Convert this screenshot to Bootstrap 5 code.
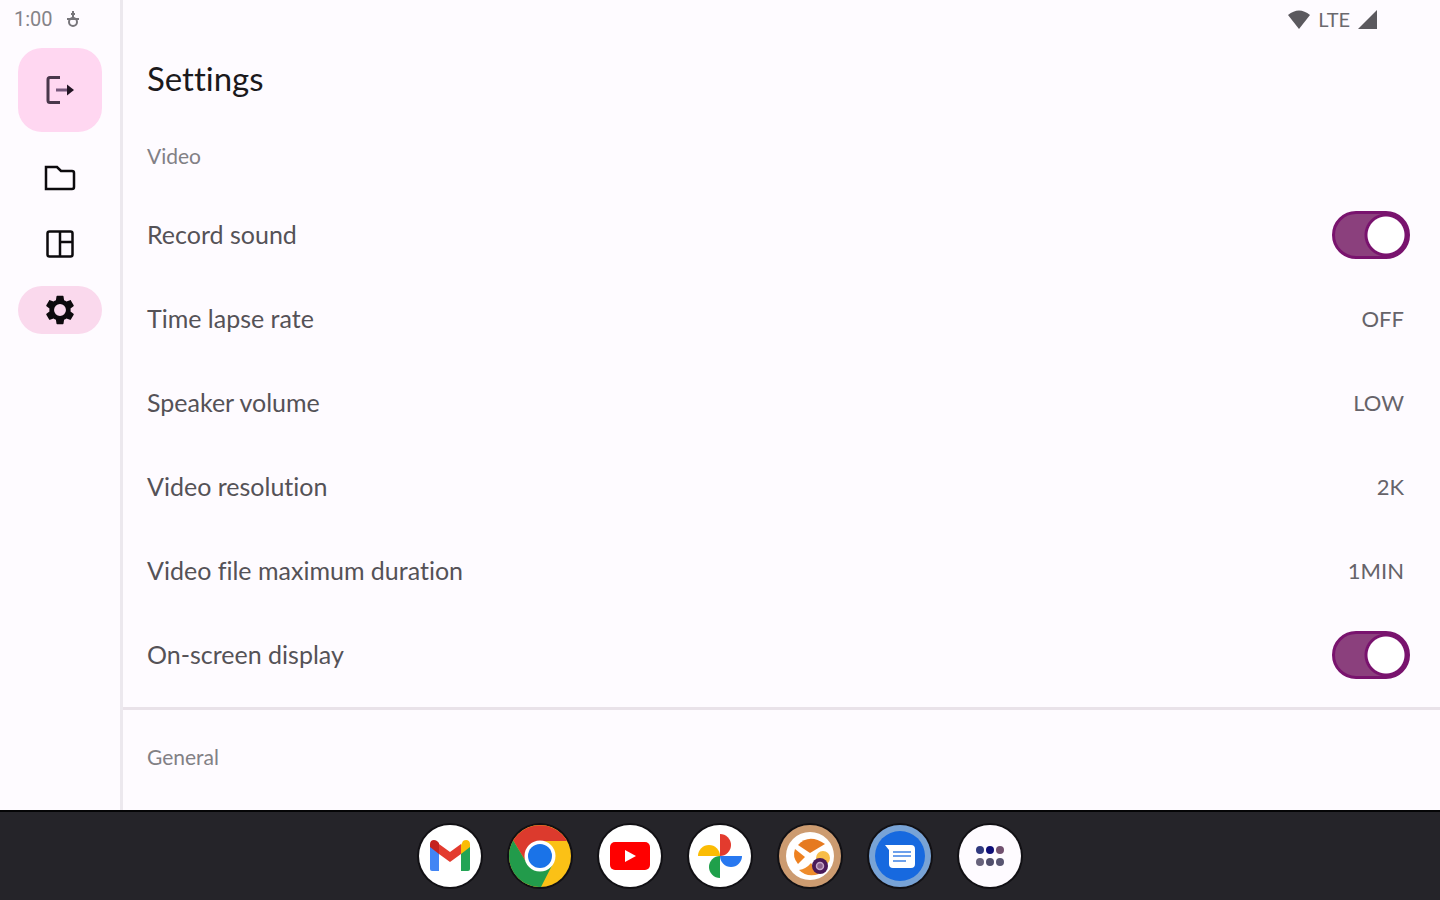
<!DOCTYPE html>
<html lang="en">
<head>
<meta charset="utf-8">
<meta name="viewport" content="width=device-width, initial-scale=1">
<title>Settings</title>
<link href="https://cdn.jsdelivr.net/npm/bootstrap@5.3.0/dist/css/bootstrap.min.css" rel="stylesheet">
<style>
  body { font-family: Lato, "Liberation Sans", sans-serif; font-variant-ligatures: none; background: #fefbff; color: #555257; }
  .rail { width: 123px; border-right: 3px solid #ece8ee; }
  .status { height: 38px; font-size: 20px; line-height: 38px; color: #6b696e; }
  .clock { font-family: Roboto, sans-serif; color: #858388; padding-left: 14px; gap: 14px; }
  .status-right { padding-right: 63px; gap: 8px; }
  .exit-btn { width: 84px; height: 84px; margin: 10px 0 22px; border-radius: 24px; background: #ffd7f1; }
  .rail-nav { gap: 18px; }
  .rail-link { width: 84px; height: 48px; border-radius: 24px; color: #0c0a0d; }
  .rail-link.active { background: #fad9ed; }
  .page-title { font-size: 33px; line-height: 42px; margin: 19px 0 36px; color: #1b191c; }
  .section-label { font-size: 21px; line-height: 42px; margin: 0; color: #828085; }
  .setting { height: 84px; font-size: 25px; }
  .setting-value { font-size: 22px; padding: 0 6px; color: #666369; line-height: 48px; }
  .pad-x { padding-left: 24px; padding-right: 30px; }
  .first-label { margin-bottom: 16px; }
  .rule { border-top: 3px solid #e9e2e9; margin: 10px 0 26px; }
  .switch { width: 78px; height: 48px; margin: 0; border: 3px solid #79136e; border-radius: 24px; appearance: none; background: radial-gradient(circle at 51px 21px, #fff 18px, #79136e 19px, #79136e 21px, #8b407d 22px); }
  .switch:not(:checked) { background: radial-gradient(circle at 21px 21px, #79136e 16px, #eee4ee 17px); }
  .dock { height: 90px; gap: 28px; background: #252429; border-top: 2px solid #050506; }
  .dock-btn { width: 62px; height: 62px; box-shadow: 0 0 0 2px #111014; }
</style>
</head>
<body class="vh-100 d-flex flex-column overflow-hidden">
<div class="d-flex flex-grow-1 overflow-hidden">
  <aside class="rail d-flex flex-column align-items-center flex-shrink-0">
    <div class="status clock d-flex align-items-center align-self-start">
      <span>1:00</span>
      <svg width="12" height="18" viewBox="0 0 12 18" fill="none" stroke="#77757a" stroke-width="2" aria-hidden="true"><circle cx="6" cy="12" r="4"/><path d="M0 9h12M6 1v7M4 4h4"/></svg>
    </div>
    <button type="button" class="exit-btn btn border-0 p-0 d-flex align-items-center justify-content-center" aria-label="Exit">
      <svg width="30" height="30" viewBox="0 0 30 30" fill="none" stroke="#49374b" stroke-width="3" aria-hidden="true"><path d="M15 2.500H5Q3 2.500 3 4.500v21q0 2 2 2h10"/><path d="M11 15h12" stroke="#75577a"/><path d="M22 9.500 29 15l-7 5.500z" fill="#211423" stroke="none"/></svg>
    </button>
    <nav class="rail-nav nav flex-column" aria-label="Main">
      <a href="#files" class="rail-link d-flex align-items-center justify-content-center" aria-label="Files">
        <svg width="32" height="26" viewBox="0 0 32 26" fill="none" stroke="currentColor" stroke-width="2.500" aria-hidden="true"><path d="M2 2h11l4 4h11q2 0 2 2v14q0 2-2 2H2z"/></svg>
      </a>
      <a href="#layout" class="rail-link d-flex align-items-center justify-content-center" aria-label="Layout">
        <svg width="28" height="28" viewBox="0 0 28 28" fill="none" stroke="currentColor" stroke-width="2.500" aria-hidden="true"><rect x="1.500" y="1.500" width="25" height="25" rx="2"/><path d="M14 2v24M14 12h12"/></svg>
      </a>
      <a href="#settings" class="rail-link active d-flex align-items-center justify-content-center" aria-label="Settings" aria-current="page">
        <svg width="34" height="34" viewBox="0 0 24 24" fill="currentColor" aria-hidden="true"><path fill-rule="evenodd" d="M19.430 12.980c.04-.32.07-.64.07-.98s-.03-.66-.07-.98l2.110-1.650c.19-.15.24-.42.12-.64l-2-3.460c-.12-.22-.39-.3-.61-.22l-2.490 1c-.52-.4-1.080-.73-1.690-.98l-.38-2.650A.49.49 0 0 0 14 2h-4c-.25 0-.46.18-.49.42l-.38 2.650c-.61.25-1.170.59-1.690.98l-2.490-1c-.23-.09-.49 0-.61.22l-2 3.460c-.13.22-.07.49.12.64l2.110 1.650c-.04.32-.07.65-.07.98s.03.66.07.98l-2.110 1.650c-.19.15-.24.42-.12.64l2 3.460c.12.22.39.3.61.22l2.490-1c.52.4 1.080.73 1.690.98l.38 2.650c.03.24.24.42.49.42h4c.25 0 .46-.18.49-.42l.38-2.650c.61-.25 1.170-.59 1.690-.98l2.490 1c.23.09.49 0 .61-.22l2-3.460c.12-.22.07-.49-.12-.64zM12 16.200a4.200 4.200 0 1 1 0-8.400 4.200 4.200 0 0 1 0 8.400z"/></svg>
      </a>
    </nav>
  </aside>

  <main class="flex-grow-1 overflow-hidden">
    <div class="status status-right d-flex align-items-center justify-content-end">
      <svg width="22" height="19" viewBox="0 0 22 19" fill="#5b595e" aria-label="Wi-Fi" role="img"><path d="M0 5Q11-4 22 5L11 19z"/></svg>
      <span>LTE</span>
      <svg width="19" height="19" viewBox="0 0 19 19" fill="#5b595e" aria-label="Signal" role="img"><path d="M19 0v19H0z"/></svg>
    </div>
    <h1 class="page-title fw-normal pad-x">Settings</h1>
    <h2 class="section-label first-label fw-normal pad-x">Video</h2>
    <div class="setting pad-x d-flex align-items-center justify-content-between">
      <label for="sound">Record sound</label><input id="sound" class="switch" type="checkbox" role="switch" checked>
    </div>
    <div class="setting pad-x d-flex align-items-center justify-content-between"><span>Time lapse rate</span><button type="button" class="setting-value btn border-0">OFF</button></div>
    <div class="setting pad-x d-flex align-items-center justify-content-between"><span>Speaker volume</span><button type="button" class="setting-value btn border-0">LOW</button></div>
    <div class="setting pad-x d-flex align-items-center justify-content-between"><span>Video resolution</span><button type="button" class="setting-value btn border-0">2K</button></div>
    <div class="setting pad-x d-flex align-items-center justify-content-between"><span>Video file maximum duration</span><button type="button" class="setting-value btn border-0">1MIN</button></div>
    <div class="setting pad-x d-flex align-items-center justify-content-between">
      <label for="osd">On-screen display</label><input id="osd" class="switch" type="checkbox" role="switch" checked>
    </div>
    <div class="rule"></div>
    <h2 class="section-label fw-normal pad-x">General</h2>
  </main>
</div>

<footer class="dock d-flex align-items-center justify-content-center flex-shrink-0">
  <button type="button" class="dock-btn btn border-0 p-0 rounded-circle" aria-label="Gmail">
    <svg class="d-block" width="62" height="62" viewBox="0 0 62 62" aria-hidden="true"><circle cx="31" cy="31" r="31" fill="#fff"/><path d="M11 20v24q0 2 2 2h7V27z" fill="#4285f4"/><path d="M51 20v24q0 2-2 2h-7V27z" fill="#23a455"/><path d="M42 20v9l9-7v-3c0-4-4-5-7-3z" fill="#fbbc04"/><path d="M20 19v10l11 8 11-8V19l-11 8z" fill="#e33b2e"/><path d="M11 19c0-4 4-5 7-3l2 2v11l-9-7z" fill="#c5221f"/></svg>
  </button>
  <button type="button" class="dock-btn btn border-0 p-0 rounded-circle" aria-label="Chrome">
    <svg class="d-block" width="62" height="62" viewBox="0 0 62 62" aria-hidden="true"><circle cx="31" cy="31" r="31" fill="#fbc116"/><path d="M31 16h27A31 31 0 0 0 4.200 15.500L18 38.500z" fill="#dc3a2d"/><path d="M4.200 15.500A31 31 0 0 0 32 62l12-23.500H18z" fill="#229b4b"/><circle cx="31" cy="31" r="15.500" fill="#fff"/><circle cx="31" cy="31" r="12" fill="#1a73e8"/></svg>
  </button>
  <button type="button" class="dock-btn btn border-0 p-0 rounded-circle" aria-label="YouTube">
    <svg class="d-block" width="62" height="62" viewBox="0 0 62 62" aria-hidden="true"><circle cx="31" cy="31" r="31" fill="#fff"/><rect x="11" y="17" width="40" height="28" rx="5" fill="#f00"/><path d="M26 25v12l11-6z" fill="#fff"/></svg>
  </button>
  <button type="button" class="dock-btn btn border-0 p-0 rounded-circle" aria-label="Photos">
    <svg class="d-block" width="62" height="62" viewBox="0 0 62 62" aria-hidden="true"><circle cx="31" cy="31" r="31" fill="#fff"/><path d="M31 9a11 11 0 0 1 0 22z" fill="#e33b2e"/><path d="M53 31a11 11 0 0 1-22 0z" fill="#2878f0"/><path d="M31 53a11 11 0 0 1 0-22z" fill="#1fa04b"/><path d="M9 31a11 11 0 0 1 22 0z" fill="#fbbc04"/></svg>
  </button>
  <button type="button" class="dock-btn btn border-0 p-0 rounded-circle" aria-label="Camera recorder">
    <svg class="d-block" width="62" height="62" viewBox="0 0 62 62" aria-hidden="true"><circle cx="31" cy="31" r="31" fill="#cc9b70"/><circle cx="31" cy="31" r="24" fill="#fff"/><path d="M19 20Q30 8 46 19L31 28z" fill="#e67a20"/><path d="M16 24l10 8-7 7q-6-7-3-15z" fill="#ee8120"/><path d="M20 45q7-1 12-7l8 11q-12 4-20-4z" fill="#ee8c2c"/><circle cx="44" cy="33" r="7" fill="#f8bd48"/><circle cx="41" cy="41" r="8" fill="#4a1a58"/><circle cx="41" cy="41" r="3.500" fill="#8a618d" stroke="#c7a6c8" stroke-width="1.500"/></svg>
  </button>
  <button type="button" class="dock-btn btn border-0 p-0 rounded-circle" aria-label="Messages">
    <svg class="d-block" width="62" height="62" viewBox="0 0 62 62" aria-hidden="true"><circle cx="31" cy="31" r="31" fill="#78a3d6"/><circle cx="31" cy="31" r="25" fill="#1769df"/><path d="M16 20h26q4 0 4 4v15q0 4-4 4H24q-4 0-4-4V25z" fill="#fff"/><path d="M24 27h18M24 31h18M24 36h13" stroke="#6da0eb" stroke-width="2"/></svg>
  </button>
  <button type="button" class="dock-btn btn border-0 p-0 rounded-circle" aria-label="All apps">
    <svg class="d-block" width="62" height="62" viewBox="0 0 62 62" aria-hidden="true"><circle cx="31" cy="31" r="31" fill="#fefbff"/><circle cx="21" cy="25" r="4" fill="#30397f"/><circle cx="31" cy="25" r="4" fill="#0e0d78"/><circle cx="41" cy="25" r="4" fill="#71506f"/><circle cx="21" cy="37" r="4" fill="#67627b"/><circle cx="31" cy="37" r="4" fill="#504e6b"/><circle cx="41" cy="37" r="4" fill="#585571"/></svg>
  </button>
</footer>
<script src="https://cdn.jsdelivr.net/npm/bootstrap@5.3.0/dist/js/bootstrap.bundle.min.js"></script>
</body>
</html>
